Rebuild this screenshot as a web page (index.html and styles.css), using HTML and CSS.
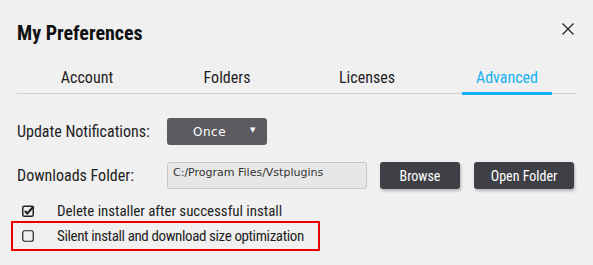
FILE: index.html
```html
<!DOCTYPE html>
<html>
<head>
<meta charset="utf-8">
<link rel="stylesheet" href="styles.css">
</head>
<body>
<div class="dialog">
  <div class="header">
    <h1 class="title">My Preferences</h1>
    <button class="close" aria-label="Close">
      <svg width="12" height="12" viewBox="0 0 12 12"><path d="M0.5 0.5 L11.5 11.5 M11.5 0.5 L0.5 11.5" stroke="#222" stroke-width="1.2" fill="none"/></svg>
    </button>
  </div>
  <div class="tabs">
    <div class="tab">Account</div>
    <div class="tab">Folders</div>
    <div class="tab">Licenses</div>
    <div class="tab active">Advanced</div>
  </div>
  <div class="row row-update">
    <div class="label">Update Notifications:</div>
    <div class="select"><span class="select-text">Once</span><span class="caret">&#9660;</span></div>
  </div>
  <div class="row row-folder">
    <div class="label">Downloads Folder:</div>
    <div class="input">C:/Program Files/Vstplugins</div>
    <button class="btn btn-browse">Browse</button>
    <button class="btn btn-open">Open Folder</button>
  </div>
  <div class="checks">
    <div class="check">
      <svg class="box" width="13" height="12" viewBox="0 0 13 12"><rect x="0.75" y="1.25" width="10.5" height="10" rx="1.5" fill="none" stroke="#222" stroke-width="1.5"/><path d="M2.8 6 L5.3 8.4 L11.6 1.6" fill="none" stroke="#222" stroke-width="2.2"/></svg>
      <span class="check-label">Delete installer after successful install</span>
    </div>
    <div class="check highlighted">
      <svg class="box" width="13" height="12" viewBox="0 0 13 12"><rect x="0.75" y="0.75" width="10.5" height="10.5" rx="2" fill="none" stroke="#222" stroke-width="1.2"/></svg>
      <span class="check-label">Silent install and download size optimization</span>
    </div>
  </div>
</div>
</body>
</html>
```
FILE: styles.css
```css
html, body {
  margin: 0;
  padding: 0;
  background: #f0f0f0;
}
body {
  font-family: Roboto, "Liberation Sans", sans-serif;
  font-stretch: 80%;
  color: #1e1e1e;
  width: 593px;
  height: 265px;
  overflow: hidden;
}
.dialog {
  padding: 0 16px 0 17px;
}
.header {
  display: flex;
  justify-content: space-between;
  align-items: center;
  height: 58px;
  padding-top: 8px;
  box-sizing: border-box;
}
.title {
  margin: 0;
  font-size: 20px;
  font-weight: 700;
  color: #111;
}
.close {
  border: 0;
  background: none;
  padding: 0;
  margin-right: 3px;
  margin-top: -8px;
  width: 12px;
  height: 12px;
  display: flex;
}
.tabs {
  display: grid;
  grid-template-columns: repeat(4, 140px);
  border-bottom: 1px solid #cfcfcf;
  width: 560px;
  margin-top: 5px;
}
.tab {
  font-size: 16px;
  text-align: center;
  height: 30px;
  line-height: 30px;
  position: relative;
  color: #1e1e1e;
}
.tab.active {
  color: #18b0f0;
}
.tab.active::after {
  content: "";
  position: absolute;
  left: 25px;
  right: 25px;
  bottom: -2px;
  height: 3px;
  background: #18b0f0;
}
.row {
  display: flex;
  align-items: center;
}
.row-update {
  margin-top: 24px;
}
.row-folder {
  margin-top: 17px;
}
.label {
  width: 150px;
  font-size: 16px;
  color: #1e1e1e;
}
.select {
  width: 100px;
  height: 27px;
  background: #5b5b60;
  border-radius: 3px;
  color: #fff;
  display: flex;
  align-items: center;
  font-family: "DejaVu Sans", sans-serif;
  font-stretch: 100%;
  font-size: 12px;
  box-sizing: border-box;
  padding-left: 26px;
}
.select-text {
  letter-spacing: 0.5px;
}
.caret {
  font-size: 7px;
  margin-left: 24px;
  margin-top: -3px;
}
.input {
  width: 200px;
  height: 27px;
  box-sizing: border-box;
  background: #e7e7e7;
  border: 1px solid #c6c6c6;
  border-radius: 3px;
  font-family: "DejaVu Sans", sans-serif;
  font-stretch: 100%;
  font-size: 11px;
  color: #333;
  padding: 3px 0 0 5px;
}
.btn {
  height: 27px;
  border: 0;
  border-radius: 3px;
  background: #3f3f46;
  color: #fff;
  font-family: Roboto, "Liberation Sans", sans-serif;
  font-stretch: 80%;
  font-size: 14px;
  box-shadow: 1px 2px 3px rgba(0,0,0,0.25);
  padding: 0;
}
.btn-browse {
  width: 80px;
  margin-left: 13px;
}
.btn-open {
  width: 100px;
  margin-left: 14px;
}
.checks {
  margin-top: 12px;
}
.check {
  display: flex;
  align-items: center;
  font-size: 15px;
  height: 20px;
}
.check-label {
  white-space: nowrap;
  letter-spacing: -0.05px;
}
.check .box {
  flex: none;
  margin-left: 5px;
  width: 13px;
  margin-right: 22px;
}
.check.highlighted {
  margin-left: -6px;
  padding-left: 6px;
  width: 299px;
  height: 26px;
  border: 2px solid #e60000;
  margin-top: 0;
}
.check.highlighted .box {
  margin-left: 3px;
}
.check.highlighted .check-label {
  letter-spacing: -0.38px;
}
```
